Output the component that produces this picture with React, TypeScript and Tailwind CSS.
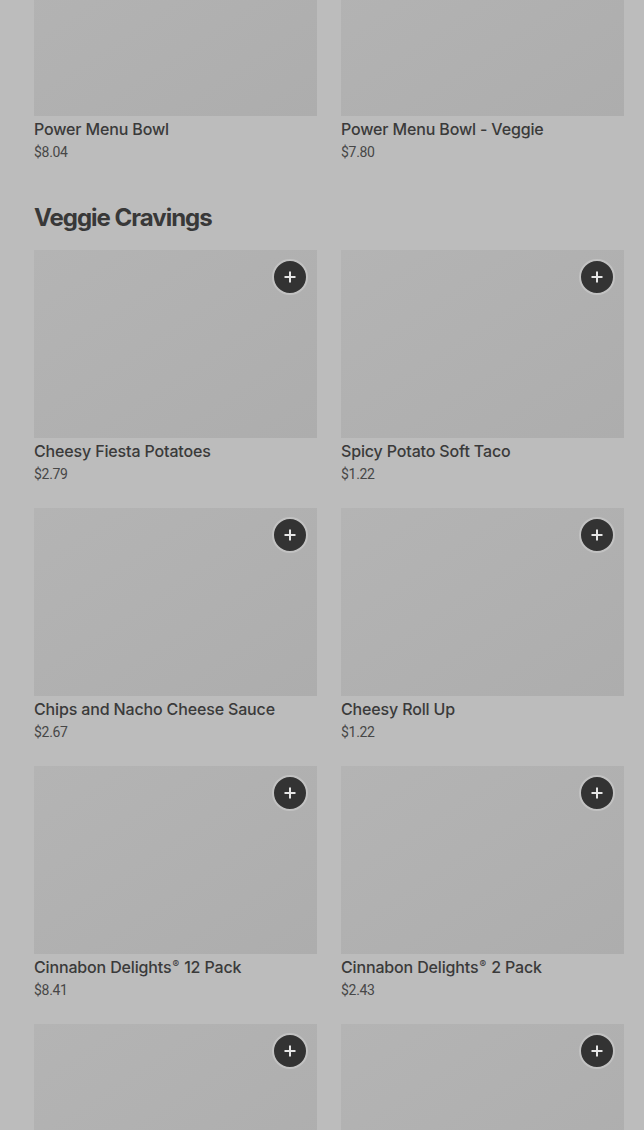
import React from 'react';

type Item = { name: string; price: string };

const topItems: Item[] = [
  { name: 'Power Menu Bowl', price: '$8.04' },
  { name: 'Power Menu Bowl - Veggie', price: '$7.80' },
];

const veggie: Item[] = [
  { name: 'Cheesy Fiesta Potatoes', price: '$2.79' },
  { name: 'Spicy Potato Soft Taco', price: '$1.22' },
  { name: 'Chips and Nacho Cheese Sauce', price: '$2.67' },
  { name: 'Cheesy Roll Up', price: '$1.22' },
  { name: 'Cinnabon Delights® 12 Pack', price: '$8.41' },
  { name: 'Cinnabon Delights® 2 Pack', price: '$2.43' },
  { name: '', price: '' },
  { name: '', price: '' },
];

// small raised ® like the source menu
const renderName = (name: string) => {
  const parts = name.split('®');
  if (parts.length === 1) return name;
  return (
    <>
      {parts[0]}
      <span className="relative -top-[5px] text-[10px] leading-none mx-[1px]">®</span>
      {parts[1]}
    </>
  );
};

const PlusButton = () => (
  <button className="absolute top-[9px] right-[9px] w-9 h-9 rounded-full bg-[#333333] border-2 border-[#c2c2c2] flex items-center justify-center">
    <svg width="14" height="14" viewBox="0 0 14 14" fill="none">
      <path d="M7 1.5v11M1.5 7h11" stroke="#e6e6e6" strokeWidth="2" />
    </svg>
  </button>
);

const Card = ({ item, button = true }: { item: Item; button?: boolean }) => (
  <div className="flex flex-col">
    <div className="relative h-[188px] bg-gradient-to-br from-[#b4b4b4] to-[#adadad]">
      {button && <PlusButton />}
    </div>
    <div
      className="pt-[3px] h-[23px] text-[16px] leading-5 font-medium tracking-[-0.15px] text-[#3a3a3a]"
      style={{ fontFamily: 'Inter, "Liberation Sans", sans-serif' }}
    >
      {renderName(item.name)}
    </div>
    <div className="pt-[3px] h-[23px] text-[14px] leading-5 text-[#474747] tracking-[-0.3px]">{item.price}</div>
  </div>
);

export default function App() {
  return (
    <div
      className="h-[1130px] w-[644px] overflow-hidden bg-[#bcbcbc]"
      style={{ fontFamily: 'Roboto, "Liberation Sans", sans-serif' }}
    >
      <div className="pl-[34px] pr-[20px] -mt-[72px]">
        <div className="grid grid-cols-2 gap-x-6">
          {topItems.map((it) => (
            <Card key={it.name} item={it} button={false} />
          ))}
        </div>
        <h2
          className="mt-10 mb-4 text-[24px] leading-8 font-bold tracking-[-1px] text-[#383838]"
          style={{ fontFamily: 'Inter, "Liberation Sans", sans-serif' }}
        >
          Veggie Cravings
        </h2>
        <div className="grid grid-cols-2 gap-x-6 gap-y-6">
          {veggie.map((it, i) => (
            <Card key={i} item={it} />
          ))}
        </div>
      </div>
    </div>
  );
}
